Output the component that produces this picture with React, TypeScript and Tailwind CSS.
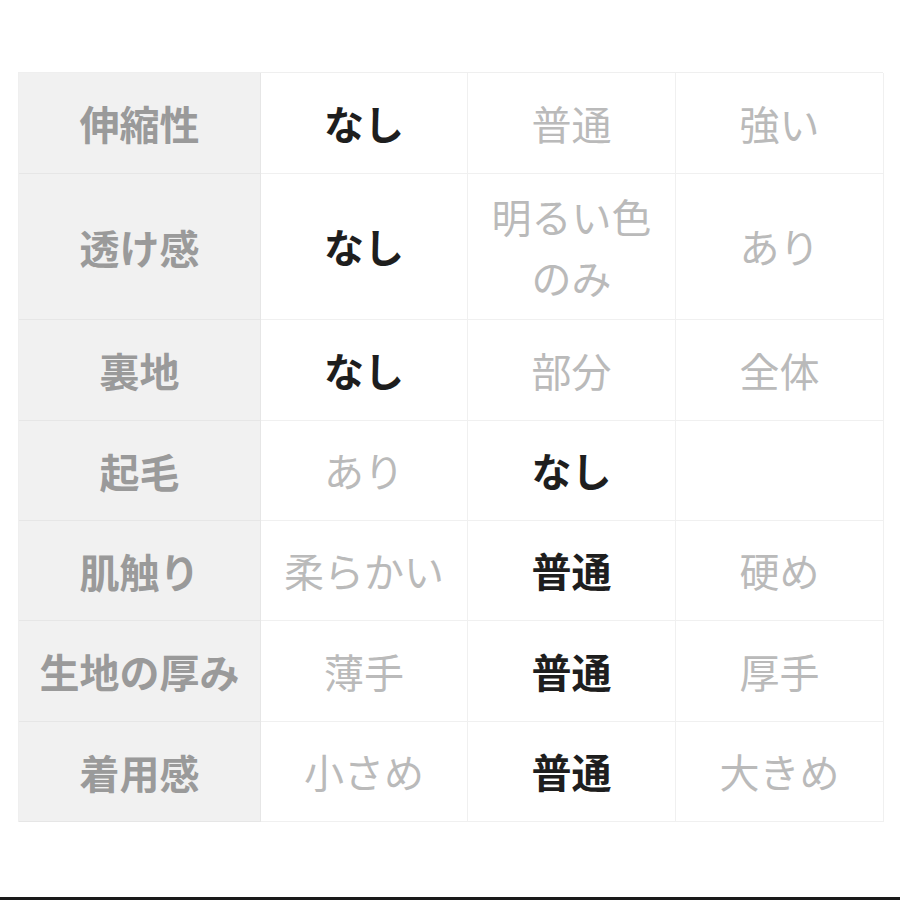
import React from "react";

type Cell = { t: string; b?: boolean };
const rows: { h: string; c: Cell[]; hc: string }[] = [
  { h: "伸縮性", c: [{ t: "なし", b: true }, { t: "普通" }, { t: "強い" }], hc: "h-[101px]" },
  { h: "透け感", c: [{ t: "なし", b: true }, { t: "明るい色\nのみ" }, { t: "あり" }], hc: "h-[146px]" },
  { h: "裏地", c: [{ t: "なし", b: true }, { t: "部分" }, { t: "全体" }], hc: "h-[101px]" },
  { h: "起毛", c: [{ t: "あり" }, { t: "なし", b: true }, { t: "" }], hc: "h-[100px]" },
  { h: "肌触り", c: [{ t: "柔らかい" }, { t: "普通", b: true }, { t: "硬め" }], hc: "h-[100px]" },
  { h: "生地の厚み", c: [{ t: "薄手" }, { t: "普通", b: true }, { t: "厚手" }], hc: "h-[101px]" },
  { h: "着用感", c: [{ t: "小さめ" }, { t: "普通", b: true }, { t: "大きめ" }], hc: "h-[100px]" },
];

export default function App() {
  return (
    <div
      className="w-[900px] h-[900px] bg-white relative"
      style={{ fontFamily: '"Noto Sans CJK JP", "Noto Sans", sans-serif' }}
    >
      <div className="pt-[72px] pl-[18px]">
        <div className="grid grid-cols-[242px_207px_208px_208px] w-[865px] border-t border-l border-[#efefef]">
          {rows.map((r, i) => (
            <React.Fragment key={i}>
              <div
                className={`${r.hc} bg-[#f1f1f1] border-b border-r border-[#e6e6e6] flex items-center justify-center text-[40px] font-bold text-[#9a9a9a] leading-none`}
              >
                {r.h}
              </div>
              {r.c.map((c, j) => (
                <div
                  key={j}
                  className={`${r.hc} bg-white border-b border-r border-[#f0f0f0] flex items-center justify-center text-center whitespace-pre-line text-[40px] leading-[61px] ${c.b ? "font-bold text-[#1e1e1e]" : "font-normal text-[#bababa]"}`}
                >
                  {c.t}
                </div>
              ))}
            </React.Fragment>
          ))}
        </div>
      </div>
      <div className="absolute left-0 right-0 bottom-0 h-[3px] bg-[#1a1a1a]" />
    </div>
  );
}
